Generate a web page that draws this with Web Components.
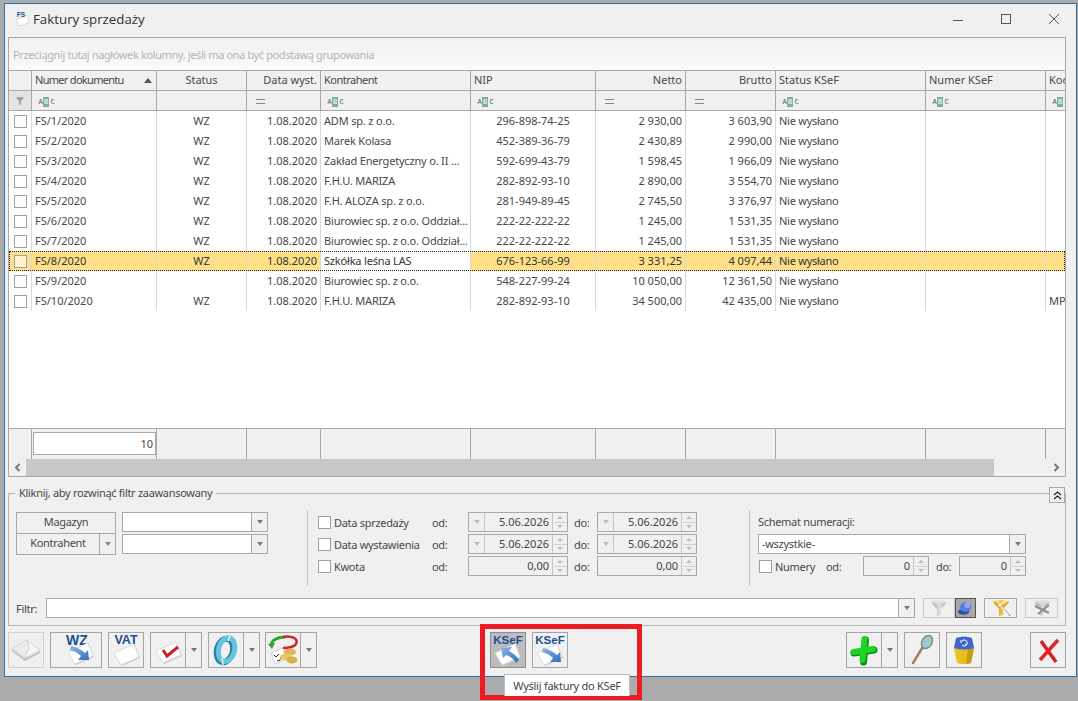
<!DOCTYPE html>
<html lang="pl">
<head>
<meta charset="utf-8">
<title>Faktury sprzedaży</title>
<style>
  html, body { margin: 0; height: 100%; background: #ababab; overflow: hidden; }
  body { font: 11px "Noto Sans", "Liberation Sans", sans-serif; color: #484848; }
</style>
</head>
<body>
<fs-window></fs-window>
<fs-highlight></fs-highlight>
<fs-tip>Wyślij faktury do KSeF</fs-tip>

<script>
const page = '<polygon points="6,19 26,10 31,23 13,31" fill="#c9c9c9"/><polygon points="5,18 25,9 30,22 12,30" fill="#fff" stroke="#dcdcdc"/>';
const arrowDef = '<defs><linearGradient id="a" x1="0" y1="0" x2="1" y2="1"><stop offset="0" stop-color="#8fb6e8"/><stop offset="1" stop-color="#2f6fbb"/></linearGradient></defs>';
const label = (t, size, x = 17, y = 11) => `<text x="${x}" y="${y}" text-anchor="middle" font-family="Liberation Sans" font-weight="700" font-size="${size}" fill="#1d4f8f">${t}</text>`;
const arrowDown = '<path d="M28,29 L17,29 L20,25 C17,22 13,20 9,19 L10,15 C15,16 21,19 24,22 L27,19 Z" fill="url(#a)"/>';
const arrowUp = '<path d="M10,15 L21,14 L18,18 C22,20 26,23 28,27 L25,30 C23,26 19,23 15,22 L12,25 Z" fill="url(#a)"/>';
const funnel = (id, a, b) => `<defs><linearGradient id="${id}" x1="0" x2="1"><stop offset="0" stop-color="${a}"/><stop offset=".55" stop-color="${b}"/><stop offset="1" stop-color="${a}"/></linearGradient></defs><path d="M4,3 H20 L14,10 V16 L10,17 V10 Z" fill="url(#${id})"/><ellipse cx="12" cy="3" rx="8" ry="1.800" fill="${b}"/>`;

const icons = {
  book: '<svg width="34" height="34" viewBox="0 0 34 34"><polygon points="3,16 16,26 31,18 31,20 16,28 3,18" fill="#bdbdbd"/><polygon points="3,15 18,7 20,14 16,25" fill="#ececec" stroke="#d4d4d4"/><polygon points="18,7 31,17 16,25 20,14" fill="#f5f5f5" stroke="#d4d4d4"/></svg>',
  wz: `<svg width="50" height="34" viewBox="0 0 50 34">${arrowDef}${label('WZ', 14, 26, 12)}<g transform="translate(12,1)">${page}</g><g transform="translate(10,-2)">${arrowDown}</g></svg>`,
  vat: `<svg width="34" height="34" viewBox="0 0 34 34">${label('VAT', 12.5, 17, 11)}<g transform="translate(0,2)">${page}</g></svg>`,
  check: `<svg width="34" height="34" viewBox="0 0 34 34">${page}<path d="M12,17 L16,23 L27,14" fill="none" stroke="#c4202c" stroke-width="3"/></svg>`,
  ring: '<svg width="34" height="34" viewBox="0 0 34 34"><ellipse cx="16" cy="17.500" rx="8" ry="12" transform="rotate(14 16 17)" fill="none" stroke="#2d7f9e" stroke-width="6"/><ellipse cx="17.500" cy="16.500" rx="8" ry="12" transform="rotate(14 17 17)" fill="none" stroke="#62c6e2" stroke-width="5"/><path d="M21,3 L19,8 M13,25 L14,32" stroke="#f0f0f0" stroke-width="1.500"/></svg>',
  coins: '<svg width="34" height="34" viewBox="0 0 34 34"><polygon points="5,20 17,15 20,26 9,31" fill="#fff" stroke="#d0d0d0"/><path d="M8,22 l2,2 l3,-3 M11,27 l2,1 l2,-3" stroke="#333" fill="none"/><path d="M5,13 C5,7 12,4 19,4" fill="none" stroke="#2aa52a" stroke-width="3"/><path d="M2,11 L6,16 L9,10 Z" fill="#2aa52a"/><path d="M17,4 C26,2 33,6 30,11 C28,14 23,15 17,15" fill="none" stroke="#d2232a" stroke-width="2.500"/><ellipse cx="24" cy="19" rx="6" ry="3.500" fill="#ddb64f"/><ellipse cx="20" cy="24" rx="6" ry="3.500" fill="#e9c868"/><ellipse cx="26" cy="27" rx="5.500" ry="3.500" fill="#d9b048"/></svg>',
  ksefUp: `<svg width="34" height="34" viewBox="0 0 34 34">${arrowDef}${label('KSeF', 11.500)}<g transform="translate(-1,2)">${page}</g>${arrowUp}</svg>`,
  ksefDown: `<svg width="34" height="34" viewBox="0 0 34 34">${arrowDef}${label('KSeF', 11.500)}<g transform="translate(-1,2)">${page}</g>${arrowDown}</svg>`,
  plus: '<svg width="34" height="34" viewBox="0 0 34 34"><g stroke="#0b8f12" stroke-linecap="round"><path d="M18.500,7 L16.500,29" stroke-width="7"/><path d="M7,20 L27,17" stroke-width="7"/></g><g stroke="#1cd424" stroke-linecap="round"><path d="M17.500,6 L15.500,27" stroke-width="6"/><path d="M6.500,19 L26,16" stroke-width="6"/></g></svg>',
  lens: '<svg width="34" height="34" viewBox="0 0 34 34"><path d="M8,30 L19,12" stroke="#a97a66" stroke-width="2.500" stroke-linecap="round"/><ellipse cx="22" cy="9" rx="5" ry="7" transform="rotate(30 22 9)" fill="#9accd8" stroke="#8a8a7a" stroke-width="1.500"/></svg>',
  bin: '<svg width="34" height="34" viewBox="0 0 34 34"><path d="M7,15 L27,15 L24,30 Q17,32 10,30 Z" fill="#e8c11e"/><path d="M21,15 L27,15 L24,30 Q22,31 19,31 Z" fill="#c79e12"/><path d="M7,15 L9,5 Q17,2 25,5 L27,15 Q17,18 7,15 Z" fill="#3f66cc"/><path d="M15,8 a3,3 0 1 1 0,4 M20,12 l-2,-1 M14,7 v3" stroke="#fff" fill="none"/></svg>',
  close: '<svg width="34" height="34" viewBox="0 0 34 34"><path d="M10,8 L25,29" stroke="#d51f20" stroke-width="3.500"/><path d="M27,7 L9,27" stroke="#e02526" stroke-width="3.500"/></svg>',
  funnel: `<svg width="24" height="18" viewBox="0 0 24 18">${funnel('f1', '#9b9b9b', '#e2e2e2')}</svg>`,
  pin: '<svg width="20" height="18" viewBox="0 0 20 18"><ellipse cx="8" cy="13" rx="6" ry="3" fill="#2e4fa8"/><ellipse cx="10" cy="8" rx="6" ry="5" fill="#5b7fe0"/><ellipse cx="12" cy="6" rx="3" ry="3" fill="#8fa8f0"/></svg>',
  funnelGold: `<svg width="24" height="18" viewBox="0 0 24 18">${funnel('f2', '#c9850e', '#f3c23c')}<path d="M9,3 L21,17" stroke="#333" stroke-width=".8"/><path d="M8,2 L20,17 M17,2 L9,7" stroke="#fff" stroke-width="1.200"/></svg>`,
  funnelOff: `<svg width="24" height="18" viewBox="0 0 24 18">${funnel('f3', '#9a9a9a', '#dddddd')}<path d="M5,7 L19,14 M19,6 L8,15" stroke="#8c8c8c" stroke-width="2"/></svg>`,
  tab: '<svg width="14" height="16" viewBox="0 0 14 16"><polygon points="1,9 12,4 14,12 4,15" fill="#fff" stroke="#d8d8d8"/><text x="6" y="6" text-anchor="middle" font-family="Liberation Sans" font-weight="700" font-size="6.500" fill="#1d4f8f">FS</text></svg>'
};

class FsWindow extends HTMLElement {
  constructor() {
    super();
    this.attachShadow({ mode: 'open' });
  }

  connectedCallback() {
    this.shadowRoot.innerHTML = `
      <style>
        :host {
          display: flex;
          flex-direction: column;
          box-sizing: border-box;
          width: 1073px;
          height: 674px;
          margin: 3px 0 0 4px;
          padding: 0 10px 0 3px;
          background: #f0f0f0;
          border: 1px solid #2a70a8;
        }
        .title {
          display: flex;
          align-items: center;
          box-sizing: border-box;
          height: 33px;
          flex: none;
          padding: 0 0 4px 7px;
          font: 13.300px "Open Sans", "Noto Sans", sans-serif;
          color: #333;
        }
        .title > svg { margin-right: 4px; flex: none; }
        .controls { display: flex; gap: 38px; align-items: center; margin-left: auto; margin-right: 7px; }
        .controls svg { display: block; margin: 0; }
      </style>
      <div class="title">
        ${icons.tab}<span>Faktury sprzedaży</span>
        <div class="controls">
          <svg width="10" height="10"><path d="M0,6.500 H10" stroke="#555"/></svg>
          <svg width="10" height="10"><rect x=".5" y=".5" width="9" height="9" fill="none" stroke="#555"/></svg>
          <svg width="10" height="10"><path d="M0,0 L10,10 M10,0 L0,10" stroke="#555"/></svg>
        </div>
      </div>
      <fs-grid></fs-grid>
      <fs-filter></fs-filter>
      <fs-toolbar></fs-toolbar>
    `;
  }
}

const COLS = '23px 125px 90px 74px 150px 125px 90px 90px 150px 120px 1fr';
const ROWS = [
  ['FS/1/2020', 'WZ', 'ADM sp. z o.o.', '296-898-74-25', '2 930,00', '3 603,90'],
  ['FS/2/2020', 'WZ', 'Marek Kolasa', '452-389-36-79', '2 430,89', '2 990,00'],
  ['FS/3/2020', 'WZ', 'Zakład Energetyczny o. II ...', '592-699-43-79', '1 598,45', '1 966,09'],
  ['FS/4/2020', 'WZ', 'F.H.U. MARIZA', '282-892-93-10', '2 890,00', '3 554,70'],
  ['FS/5/2020', 'WZ', 'F.H. ALOZA sp. z o.o.', '281-949-89-45', '2 745,50', '3 376,97'],
  ['FS/6/2020', 'WZ', 'Biurowiec sp. z o.o. Oddział...', '222-22-222-22', '1 245,00', '1 531,35'],
  ['FS/7/2020', 'WZ', 'Biurowiec sp. z o.o. Oddział...', '222-22-222-22', '1 245,00', '1 531,35'],
  ['FS/8/2020', 'WZ', 'Szkółka leśna LAS', '676-123-66-99', '3 331,25', '4 097,44'],
  ['FS/9/2020', '', 'Biurowiec sp. z o.o.', '548-227-99-24', '10 050,00', '12 361,50'],
  ['FS/10/2020', 'WZ', 'F.H.U. MARIZA', '282-892-93-10', '34 500,00', '42 435,00', 'MPP']
];

class FsGrid extends HTMLElement {
  constructor() {
    super();
    this.attachShadow({ mode: 'open' });
  }

  connectedCallback() {
    const abc = '<span class="abc"><i>A</i><b>B</b><i>C</i></span>';
    const eq = '<span class="eq"></span>';
    const rows = ROWS.map((r, i) => `
      <div class="row${i === 7 ? ' sel' : ''}">
        <div class="cell"><span class="box"></span></div>
        <div class="cell">${r[0]}</div>
        <div class="cell c">${r[1]}</div>
        <div class="cell r">1.08.2020</div>
        <div class="cell focus">${r[2]}</div>
        <div class="cell c">${r[3]}</div>
        <div class="cell r">${r[4]}</div>
        <div class="cell r">${r[5]}</div>
        <div class="cell ks">Nie wysłano</div>
        <div class="cell"></div>
        <div class="cell last">${r[6] || ''}</div>
      </div>`).join('');
    this.shadowRoot.innerHTML = `
      <style>
        :host {
          display: flex;
          flex-direction: column;
          flex: none;
          box-sizing: border-box;
          height: 440px;
          border: 1px solid #a8a8a8;
          background: #fff;
          overflow: hidden;
        }
        .group {
          height: 32px;
          line-height: 34px;
          flex: none;
          padding-left: 4px;
          color: #b4b4b4;
          letter-spacing: -.38px;
          background: linear-gradient(#f0f0f0, #fafafa);
          border-bottom: 1px solid #a8a8a8;
        }
        .row { display: grid; grid-template-columns: ${COLS}; height: 20px; flex: none; }
        .cell {
          padding: 0 3px;
          line-height: 20px;
          white-space: nowrap;
          overflow: hidden;
          border-right: 1px solid #d9d9d9;
          box-sizing: border-box;
        }
        .cell.last { border-right: 0; }
        .c { text-align: center; }
        .r { text-align: right; }
        .focus { letter-spacing: -.18px; }
        .ks { letter-spacing: -.25px; }
        .head .cell, .fil .cell, .foot .cell { background: #f0f0f0; border-right-color: #a8a8a8; }
        .head, .fil { border-bottom: 1px solid #a8a8a8; height: 20px; box-sizing: border-box; }
        .head .cell { line-height: 18px; }
        .fil .cell { line-height: 19px; }
        .head .sort { position: relative; display: block; letter-spacing: -.7px; }
        .head .sort::after {
          content: "";
          position: absolute;
          right: 1px;
          top: 7px;
          border: 4.500px solid transparent;
          border-top: 0;
          border-bottom: 5px solid #555;
        }
        .head .tight { letter-spacing: -.5px; }
        .fil .cell.ind { background: #e4e4e4; display: flex; align-items: center; justify-content: center; padding: 0; }
        .abc { display: inline-flex; align-items: center; margin: 1px 0 0 3px; height: 19px; font: 7px "Liberation Mono", monospace; color: #555; vertical-align: top; }
        .abc i, .abc b { font-style: normal; font-weight: 400; width: 5px; text-align: center; }
        .abc b { background: #7eae9a; color: #fff; width: 6px; height: 10px; line-height: 10px; margin-right: 1px; }
        .eq { display: inline-block; width: 9px; height: 3px; margin: 8px 0 0 6px; border-top: 1px solid #888; border-bottom: 1px solid #888; vertical-align: top; }
        .box {
          display: block;
          box-sizing: border-box;
          width: 13px;
          height: 13px;
          margin: 4px 0 0 2px;
          background: #fff;
          border: 1px solid #a0a0a0;
        }
        .sel { background: #ffe088; outline: 1px dotted #222; outline-offset: -1px; color: #333; }
        .sel .focus { background: #fff; }
        .sel .box { background: #fff3d0; }
        .body { flex: 1; min-height: 0; display: flex; flex-direction: column; padding-bottom: 0; }
        .foot { flex: none; height: 30px; border-top: 1px solid #a8a8a8; }
        .foot .cell { padding: 3px 0 0 1px; }
        .foot .total {
          box-sizing: border-box;
          height: 23px;
          line-height: 21px;
          border: 1px solid #a8a8a8;
          background: #fff;
          text-align: right;
          padding-right: 2px;
        }
        .scroll { flex: none; display: flex; height: 17px; background: #f0f0f0; color: #777; }
        .scroll span { width: 17px; display: flex; align-items: center; justify-content: center; flex: none; }
        .thumb { width: 968px; background: #c8c8c8; flex: none; }
        .track { flex: 1; }
      </style>
      <div class="group">Przeciągnij tutaj nagłówek kolumny, jeśli ma ona być podstawą grupowania</div>
      <div class="row head">
        <div class="cell"></div>
        <div class="cell"><span class="sort">Numer dokumentu</span></div>
        <div class="cell c">Status</div>
        <div class="cell r">Data wyst.</div>
        <div class="cell tight">Kontrahent</div>
        <div class="cell">NIP</div>
        <div class="cell r">Netto</div>
        <div class="cell r">Brutto</div>
        <div class="cell">Status KSeF</div>
        <div class="cell">Numer KSeF</div>
        <div class="cell last">Kod</div>
      </div>
      <div class="row fil">
        <div class="cell ind"><svg width="10" height="10" viewBox="0 0 24 24"><path d="M2,3 H22 L14,12 V22 L10,19 V12 Z" fill="#9a9a9a"/></svg></div>
        <div class="cell">${abc}</div>
        <div class="cell"></div>
        <div class="cell">${eq}</div>
        <div class="cell">${abc}</div>
        <div class="cell">${abc}</div>
        <div class="cell">${eq}</div>
        <div class="cell">${eq}</div>
        <div class="cell">${abc}</div>
        <div class="cell">${abc}</div>
        <div class="cell last">${abc}</div>
      </div>
      <div class="body">${rows}</div>
      <div class="row foot">
        <div class="cell"></div>
        <div class="cell"><div class="total">10</div></div>
        <div class="cell"></div><div class="cell"></div><div class="cell"></div><div class="cell"></div>
        <div class="cell"></div><div class="cell"></div><div class="cell"></div><div class="cell"></div>
        <div class="cell last"></div>
      </div>
      <div class="scroll">
        <span><svg width="7" height="9"><path d="M5.500,1 L2,4.500 L5.500,8" fill="none" stroke="#777" stroke-width="2"/></svg></span>
        <div class="thumb"></div>
        <div class="track"></div>
        <span><svg width="7" height="9"><path d="M1.500,1 L5,4.500 L1.500,8" fill="none" stroke="#777" stroke-width="2"/></svg></span>
      </div>
    `;
  }
}

class FsCombo extends HTMLElement {
  constructor() {
    super();
    this.attachShadow({ mode: 'open' });
  }

  connectedCallback() {
    this.shadowRoot.innerHTML = `
      <style>
        :host { display: flex; box-sizing: border-box; height: 20px; border: 1px solid #a8a8a8; background: #f0f0f0; }
        .v { flex: 1; min-width: 0; background: #fff; line-height: 18px; padding-left: 3px; border-right: 1px solid #a8a8a8; }
        .a { width: 15px; flex: none; display: flex; align-items: center; justify-content: center; }
        .a::after { content: ""; border: 3.500px solid transparent; border-bottom: 0; border-top: 4px solid #777; }
      </style>
      <div class="v"><slot></slot></div><div class="a"></div>
    `;
  }
}

class FsSpin extends HTMLElement {
  constructor() {
    super();
    this.attachShadow({ mode: 'open' });
  }

  connectedCallback() {
    const drop = this.hasAttribute('drop') ? '<div class="d"></div>' : '';
    this.shadowRoot.innerHTML = `
      <style>
        :host { display: flex; box-sizing: border-box; height: 20px; border: 1px solid #a8a8a8; background: #f0f0f0; color: #444; letter-spacing: 0; }
        .d { width: 15px; flex: none; border-right: 1px solid #c6c6c6; display: flex; align-items: center; justify-content: center; }
        .d::after { content: ""; border: 3px solid transparent; border-bottom: 0; border-top: 4px solid #bbb; }
        .v { flex: 1; min-width: 0; text-align: right; line-height: 18px; padding-right: 3px; }
        .s { width: 15px; flex: none; border-left: 1px solid #c6c6c6; display: flex; flex-direction: column; align-items: center; justify-content: space-between; padding: 3px 0; box-sizing: border-box; position: relative; }
        .s::before { content: ""; border: 3px solid transparent; border-top: 0; border-bottom: 3px solid #bbb; }
        .s::after { content: ""; border: 3px solid transparent; border-bottom: 0; border-top: 3px solid #bbb; }
        .s i { display: block; width: 13px; height: 1px; background: #cfcfcf; }
      </style>
      ${drop}<div class="v"><slot></slot></div><div class="s"><i></i></div>
    `;
  }
}

class FsCheck extends HTMLElement {
  constructor() {
    super();
    this.attachShadow({ mode: 'open' });
  }

  connectedCallback() {
    this.shadowRoot.innerHTML = `
      <style>
        :host { display: flex; align-items: center; gap: 3px; white-space: nowrap; }
        .b { box-sizing: border-box; width: 13px; height: 13px; flex: none; border: 1px solid #a0a0a0; background: #fff; }
      </style>
      <span class="b"></span><slot></slot>
    `;
  }
}

class FsFilter extends HTMLElement {
  constructor() {
    super();
    this.attachShadow({ mode: 'open' });
  }

  connectedCallback() {
    this.shadowRoot.innerHTML = `
      <style>
        :host {
          display: block;
          position: relative;
          flex: none;
          box-sizing: border-box;
          height: 133px;
          margin-top: 16px;
          padding: 18px 7px 0 7px;
          border: 1px solid #b4b4b4;
          letter-spacing: -.3px;
        }
        .legend { position: absolute; left: 6px; top: -9px; padding: 0 4px; background: #f0f0f0; line-height: 16px; }
        .fold {
          position: absolute;
          right: 0;
          top: -7px;
          box-sizing: border-box;
          width: 16px;
          height: 16px;
          border: 1px solid #a8a8a8;
          background: #f0f0f0;
          display: flex;
          align-items: center;
          justify-content: center;
        }
        .top { display: flex; height: 76px; }
        .col1 {
          display: grid;
          grid-template-columns: 100px 146px;
          grid-auto-rows: 20px;
          column-gap: 6px;
          row-gap: 2px;
          width: 252px;
          flex: none;
        }
        .btn {
          box-sizing: border-box;
          height: 22px;
          border: 1px solid #a8a8a8;
          display: flex;
          align-items: center;
          justify-content: center;
        }
        .btn span { flex: 1; text-align: center; padding-bottom: 3px; }
        .btn i { width: 15px; align-self: stretch; flex: none; border-left: 1px solid #a8a8a8; display: flex; align-items: center; justify-content: center; }
        .btn i::after { content: ""; border: 3.500px solid transparent; border-bottom: 0; border-top: 4px solid #888; }
        .sep { width: 1px; height: 76px; margin-top: -2px; background: #c4c4c4; flex: none; }
        .col2 {
          display: grid;
          grid-template-columns: 114px 36px 100px 29px 100px;
          grid-auto-rows: 20px;
          row-gap: 2px;
          align-items: center;
          margin: 0 52px 0 10px;
          width: 379px;
          flex: none;
        }
        .col2 .do { padding-left: 6px; }
        .col3 { margin-left: 8px; width: 268px; flex: none; display: flex; flex-direction: column; gap: 2px; margin-top: 0; }
        .col3 .lab { line-height: 20px; }
        .nums { display: flex; align-items: center; height: 20px; }
        .nums fs-check { width: 67px; margin-left: 1px; flex: none; }
        .nums .od { width: 37px; flex: none; }
        .nums .do { width: 30px; flex: none; padding-left: 7px; box-sizing: border-box; }
        .nums fs-spin { width: 66px; flex: none; }
        .nums fs-spin + span + fs-spin { width: 67px; }
        .line { display: flex; align-items: center; height: 20px; margin-top: 10px; }
        .line .lab { width: 30px; flex: none; }
        .line fs-combo { flex: 1; min-width: 0; }
        .tool { box-sizing: border-box; height: 20px; width: 33px; margin-left: 8px; border: 1px solid #c8c8c8; display: flex; align-items: center; justify-content: center; flex: none; }
        .tool.on { width: 21px; margin-left: 0; background: #a8a8a8; border-color: #555; }
        .tool.first { width: 32px; }
        .tool.strong { border-color: #a8a8a8; }
      </style>
      <div class="legend">Kliknij, aby rozwinąć filtr zaawansowany</div>
      <div class="fold"><svg width="9" height="9"><path d="M1,4 L4.500,1 L8,4 M1,8 L4.500,5 L8,8" fill="none" stroke="#222" stroke-width="1.300"/></svg></div>
      <div class="top">
        <div class="col1">
          <div class="btn"><span>Magazyn</span></div>
          <fs-combo></fs-combo>
          <div class="btn" style="margin-top:-1px"><span>Kontrahent</span><i></i></div>
          <fs-combo></fs-combo>
        </div>
        <div style="width:39px;flex:none"></div>
        <div class="sep"></div>
        <div class="col2">
          <fs-check>Data sprzedaży</fs-check><span>od:</span><fs-spin drop>5.06.2026</fs-spin><span class="do">do:</span><fs-spin drop>5.06.2026</fs-spin>
          <fs-check>Data wystawienia</fs-check><span>od:</span><fs-spin drop>5.06.2026</fs-spin><span class="do">do:</span><fs-spin drop>5.06.2026</fs-spin>
          <fs-check>Kwota</fs-check><span>od:</span><fs-spin>0,00</fs-spin><span class="do">do:</span><fs-spin>0,00</fs-spin>
        </div>
        <div class="sep"></div>
        <div class="col3">
          <div class="lab">Schemat numeracji:</div>
          <fs-combo>-wszystkie-</fs-combo>
          <div class="nums">
            <fs-check>Numery</fs-check><span class="od">od:</span><fs-spin>0</fs-spin><span class="do">do:</span><fs-spin>0</fs-spin>
          </div>
        </div>
      </div>
      <div class="line">
        <span class="lab">Filtr:</span>
        <fs-combo></fs-combo>
        <div class="tool first">${icons.funnel}</div>
        <div class="tool on">${icons.pin}</div>
        <div class="tool strong">${icons.funnelGold}</div>
        <div class="tool">${icons.funnelOff}</div>
      </div>
    `;
  }
}

class FsBtn extends HTMLElement {
  constructor() {
    super();
    this.attachShadow({ mode: 'open' });
  }

  connectedCallback() {
    const split = this.hasAttribute('split') ? '<div class="a"></div>' : '';
    this.shadowRoot.innerHTML = `
      <style>
        :host { display: flex; box-sizing: border-box; height: 36px; border: 1px solid #a4a4a4; flex: none; }
        :host([off]) { border-color: #d0d0d0; }
        :host([hot]) { background: #bcbcbc; border-color: #8e8e8e; }
        .i { min-width: 34px; height: 34px; }
        svg { display: block; }
        .a { width: 16px; box-sizing: border-box; flex: none; border-left: 1px solid #a4a4a4; display: flex; align-items: center; justify-content: center; }
        .a::after { content: ""; border: 3.500px solid transparent; border-bottom: 0; border-top: 4px solid #777; }
      </style>
      <div class="i">${icons[this.getAttribute('icon')]}</div>${split}
    `;
  }
}

class FsToolbar extends HTMLElement {
  constructor() {
    super();
    this.attachShadow({ mode: 'open' });
  }

  connectedCallback() {
    this.shadowRoot.innerHTML = `
      <style>
        :host { display: flex; align-items: flex-start; flex: none; padding-top: 6px; gap: 6px; }
        .tight { margin-left: -1px; }
      </style>
      <fs-btn icon="book" off></fs-btn>
      <fs-btn icon="wz"></fs-btn>
      <fs-btn icon="vat"></fs-btn>
      <fs-btn icon="check" split></fs-btn>
      <fs-btn icon="ring" split></fs-btn>
      <fs-btn icon="coins" split class="tight"></fs-btn>
      <fs-btn icon="ksefUp" hot style="margin-left:167px"></fs-btn>
      <fs-btn icon="ksefDown"></fs-btn>
      <fs-btn icon="plus" split style="margin-left:272px"></fs-btn>
      <fs-btn icon="lens"></fs-btn>
      <fs-btn icon="bin"></fs-btn>
      <fs-btn icon="close" style="margin-left:42px"></fs-btn>
    `;
  }
}

class FsHighlight extends HTMLElement {
  constructor() {
    super();
    this.attachShadow({ mode: 'open' });
  }

  connectedCallback() {
    this.shadowRoot.innerHTML = `
      <style>
        :host {
          position: absolute;
          left: 480px;
          top: 624px;
          box-sizing: border-box;
          width: 162px;
          height: 76px;
          border: 5px solid #ed1c24;
        }
      </style>
    `;
  }
}

class FsTip extends HTMLElement {
  constructor() {
    super();
    this.attachShadow({ mode: 'open' });
  }

  connectedCallback() {
    this.shadowRoot.innerHTML = `
      <style>
        :host {
          position: absolute;
          left: 504px;
          top: 674px;
          box-sizing: border-box;
          width: 126px;
          height: 22px;
          line-height: 22px;
          text-align: center;
          white-space: nowrap;
          letter-spacing: -.25px;
          background: #fff;
          border: 1px solid #bdbdbd;
          border-bottom: 0;
          color: #444;
        }
      </style>
      <slot></slot>
    `;
  }
}

customElements.define('fs-combo', FsCombo);
customElements.define('fs-spin', FsSpin);
customElements.define('fs-check', FsCheck);
customElements.define('fs-btn', FsBtn);
customElements.define('fs-grid', FsGrid);
customElements.define('fs-filter', FsFilter);
customElements.define('fs-toolbar', FsToolbar);
customElements.define('fs-highlight', FsHighlight);
customElements.define('fs-tip', FsTip);
customElements.define('fs-window', FsWindow);
</script>
</body>
</html>
